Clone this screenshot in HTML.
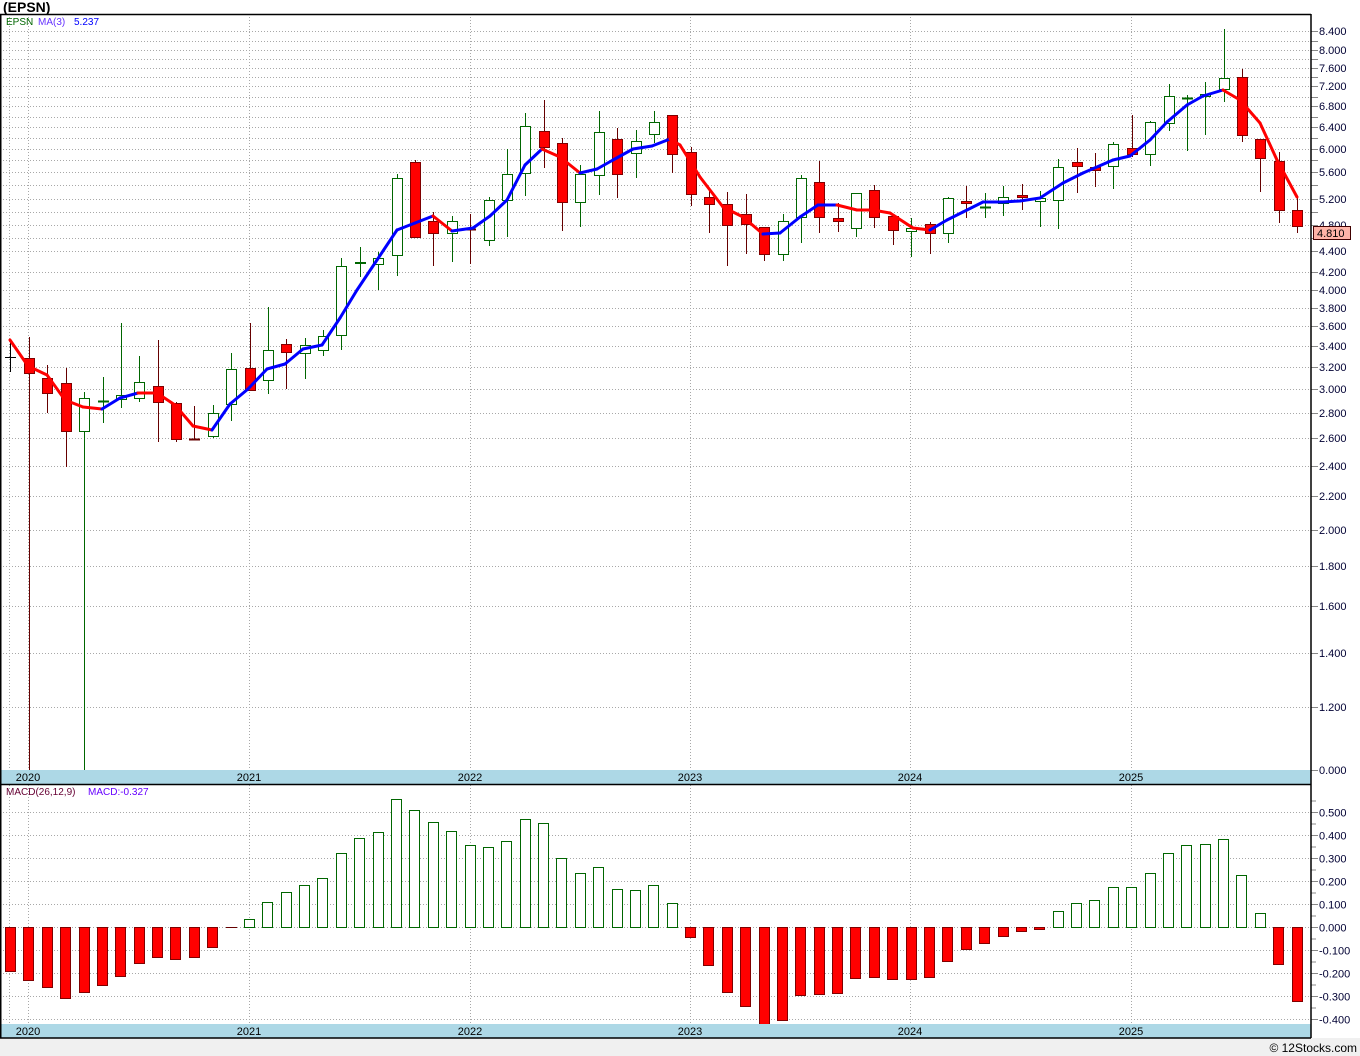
<!DOCTYPE html>
<html><head><meta charset="utf-8">
<style>
html,body{margin:0;padding:0;background:#fff;}
body{width:1360px;height:1056px;overflow:hidden;position:relative;font-family:"Liberation Sans",sans-serif;}
svg{position:absolute;left:0;top:0;}
</style></head>
<body>
<svg id="s" width="1360" height="1056" xmlns="http://www.w3.org/2000/svg" font-family="Liberation Sans, sans-serif">
<rect x="0" y="0" width="1360" height="1056" fill="#fff"/>
<rect x="0" y="1038" width="1360" height="18" fill="#f0f0f0"/>
<text x="1357" y="1052" font-size="12" text-anchor="end" fill="#000">© 12Stocks.com</text>
<text x="3" y="12" font-size="14" font-weight="bold" fill="#000">(EPSN)</text>
<g id="g"></g>
</svg>
<script>
var g=document.getElementById('g'),h='';
function L(x1,y1,x2,y2,c,w,d){h+='<line x1="'+x1+'" y1="'+y1+'" x2="'+x2+'" y2="'+y2+'" stroke="'+c+'" stroke-width="'+(w||1)+'"'+(d?' stroke-dasharray="'+d+'"':'')+'/>';}
function R(x,y,w,hh,f,s){h+='<rect x="'+x+'" y="'+y+'" width="'+w+'" height="'+hh+'" fill="'+f+'" stroke="'+s+'" stroke-width="1"/>';}
function T(x,y,t,c,sz,a){h+='<text x="'+x+'" y="'+y+'" font-size="'+(sz||11)+'" fill="'+c+'"'+(a?' text-anchor="'+a+'"':'')+'>'+t+'</text>';}
var GC='#a8a8a8',GD='1,2';
var pg=[[31,'8.400'],[41],[50,'8.000'],[59],[68,'7.600'],[77],[86,'7.200'],[97],[106,'6.800'],[117],[127,'6.400'],[138],[149,'6.000'],[160],[172,'5.600'],[185],[199,'5.200'],[212],[225,'4.800'],[238],[251,'4.400'],[272,'4.200'],[290,'4.000'],[308,'3.800'],[326,'3.600'],[346,'3.400'],[367,'3.200'],[389,'3.000'],[413,'2.800'],[438,'2.600'],[466,'2.400'],[496,'2.200'],[530,'2.000'],[566,'1.800'],[606,'1.600'],[653,'1.400'],[707,'1.200'],[770,'0.000']];
pg.forEach(function(p){var y=p[0]+0.5;if(p[0]<770)L(0,y,1311,y,GC,1,GD);L(1311,y,1318,y,'#888',1);if(p[1])T(1319,p[0]+4,p[1],'#000033',11);});
[9.5,28.5,249.5,470.5,690.5,910.5,1131.5].forEach(function(x){L(x,14,x,770,GC,1,GD);L(x,785,x,1024,GC,1,GD);});
for(var v=-4;v<=5;v++){var y=927-v*23+0.5;if(y>786&&y<1024)L(0,y,1311,y,GC,1,GD);L(1311,y,1318,y,'#888',1);L(1311,y-11.5,1316,y-11.5,'#888',1);T(1319,y+4,(v<0?'-':'')+'0.'+Math.abs(v)+'00','#000033',11);}
var C=[[358,373,337,770],[378,393,365,413],[383,431,368,467],[431,398,392,770],[401,401,377,423],[399,395,323,408],[398,382,356,402],[386,402,340,442],[403,439,402,442],[439,439,406,439],[436,413,405,438],[404,369,353,421],[368,390,323,390],[380,350,307,394],[344,352,339,389],[353,345,338,379],[350,336,330,356],[335,266,258,350],[263,262,247,277],[264,258,252,290],[255,178,174,276],[162,237,160,237],[221,233,212,266],[233,221,216,262],[229,229,214,264],[240,200,197,246],[200,174,149,237],[173,126,113,196],[131,147,100,168],[143,202,138,231],[202,174,165,227],[175,132,111,195],[139,174,128,198],[153,141,130,178],[134,122,111,143],[115,154,115,173],[152,194,147,206],[197,204,190,233],[204,225,192,266],[214,224,194,254],[227,254,227,261],[254,221,214,261],[217,178,175,243],[182,217,161,233],[218,221,203,232],[228,193,193,237],[190,217,185,228],[216,230,216,245],[231,228,218,257],[224,233,222,254],[233,198,197,243],[201,203,186,218],[207,207,193,218],[203,197,186,216],[195,197,184,210],[201,198,191,227],[200,167,159,229],[162,166,148,193],[167,170,153,187],[166,144,142,189],[148,154,115,157],[154,122,121,166],[123,96,84,131],[98,98,95,151],[96,94,82,135],[89,78,29,102],[77,135,69,142],[139,158,139,192],[161,210,152,223],[210,226,198,233]];
L(10.5,340,10.5,372,'#000',1);L(5,357.5,16,357.5,'#000',1);
C.forEach(function(c,i){var x=Math.round(29+18.38*i),o=c[0],cl=c[1];var red=cl>o;var wc=red?'#660000':'#006600';
if(o==cl){wc=(i==9||i==24)?'#660000':'#006600';L(x+0.5,c[2],x+0.5,c[3],wc,1);L(x-5,o+0.5,x+6,o+0.5,wc,2);return;}
L(x+0.5,c[2],x+0.5,c[3],wc,1);
var t=Math.min(o,cl),b=Math.max(o,cl);
if(red)R(x-5+0.5,t+0.5,10,b-t,'#ff0000','#800000');else R(x-5+0.5,t+0.5,10,b-t,'#fff','#006600');});
var M=[[10,340,'r'],[28,366,'r'],[47,375,'r'],[65,400,'r'],[83,407,'r'],[102,409,'b'],[120,398,'b'],[138,393,'r'],[157,393,'r'],[175,405,'r'],[193,426,'r'],[212,430,'b'],[230,404,'b'],[248,389,'b'],[267,369,'b'],[285,364,'b'],[303,349,'b'],[322,345,'b'],[340,318,'b'],[357,290,'b'],[377,260,'b'],[397,230,'b'],[415,223,'b'],[433,216,'r'],[452,231,'b'],[473,228,'b'],[490,216,'b'],[507,200,'b'],[525,165,'b'],[542,149,'r'],[560,157,'r'],[580,173,'b'],[597,169,'b'],[613,160,'b'],[633,149,'b'],[652,146,'b'],[670,139,'r'],[680,145,'r'],[700,177,'r'],[723,207,'r'],[743,217,'r'],[763,234,'b'],[780,233,'b'],[800,217,'b'],[818,205,'b'],[837,205,'r'],[857,210,'r'],[873,210,'r'],[890,213,'r'],[913,228,'r'],[930,230,'b'],[947,220,'b'],[963,212,'b'],[983,202,'b'],[1003,202,'b'],[1020,201,'b'],[1040,198,'b'],[1063,183,'b'],[1083,173,'b'],[1113,160,'b'],[1130,156,'b'],[1150,140,'b'],[1167,122,'b'],[1187,105,'b'],[1203,96,'b'],[1223,90,'r'],[1240,100,'r'],[1260,123,'r'],[1277,160,'r'],[1297,197,'r']];
for(var i=0;i<M.length-1;i++){h+='<line x1="'+M[i][0]+'" y1="'+M[i][1]+'" x2="'+M[i+1][0]+'" y2="'+M[i+1][1]+'" stroke="'+(M[i][2]=='r'?'#ff0000':'#0000ff')+'" stroke-width="3" stroke-linecap="round"/>';}
var B=[971,980,987,998,992,985,976,963,957,959,957,947,927,919,902,892,885,878,853,838,832,799,810,822,831,845,847,841,819,823,858,873,867,889,890,885,903,937,965,992,1006,1025,1020,995,994,993,978,977,979,979,977,961,949,943,936,931,929,911,903,900,887,887,873,853,845,844,839,875,913,964,1001];
B.forEach(function(v,k){var x=Math.round(10+18.38*k);
if(v==927){L(x-5,927.5,x+6,927.5,'#660000',1);return;}
if(v>927){var bb=Math.min(v,1024);R(x-5+0.5,927.5,10,bb-927,'#ff0000','#800000');}
else R(x-5+0.5,v+0.5,10,927-v,'#fff','#006600');});
h+='<rect x="0" y="770" width="1311" height="14" fill="#add8e6"/>';L(0,784.5,1311,784.5,'#000',1.5);
h+='<rect x="0" y="1024" width="1311" height="14" fill="#add8e6"/>';L(0,1038,1311,1038,'#000',1.5);
[[28,'2020'],[249,'2021'],[470,'2022'],[690,'2023'],[910,'2024'],[1131,'2025']].forEach(function(a){T(a[0],781,a[1],'#000',11,'middle');T(a[0],1035,a[1],'#000',11,'middle');});
L(0,14.5,1311,14.5,'#000',1.5);L(0.75,14,0.75,1038,'#000',1.5);L(1311,14,1311,1038,'#000',1.5);
T(6,25,'EPSN','#006600',10);T(38,25,'MA(3)','#6633ff',10);T(74,25,'5.237','#0000ff',10);
T(6,795,'MACD(26,12,9)','#660033',10);T(88,795,'MACD:-0.327','#6600ff',10);
R(1313.5,226.5,37,13,'#ffb3a8','#400000');T(1317,237,'4.810','#000',11);
g.innerHTML=h;
</script>
</body></html>
